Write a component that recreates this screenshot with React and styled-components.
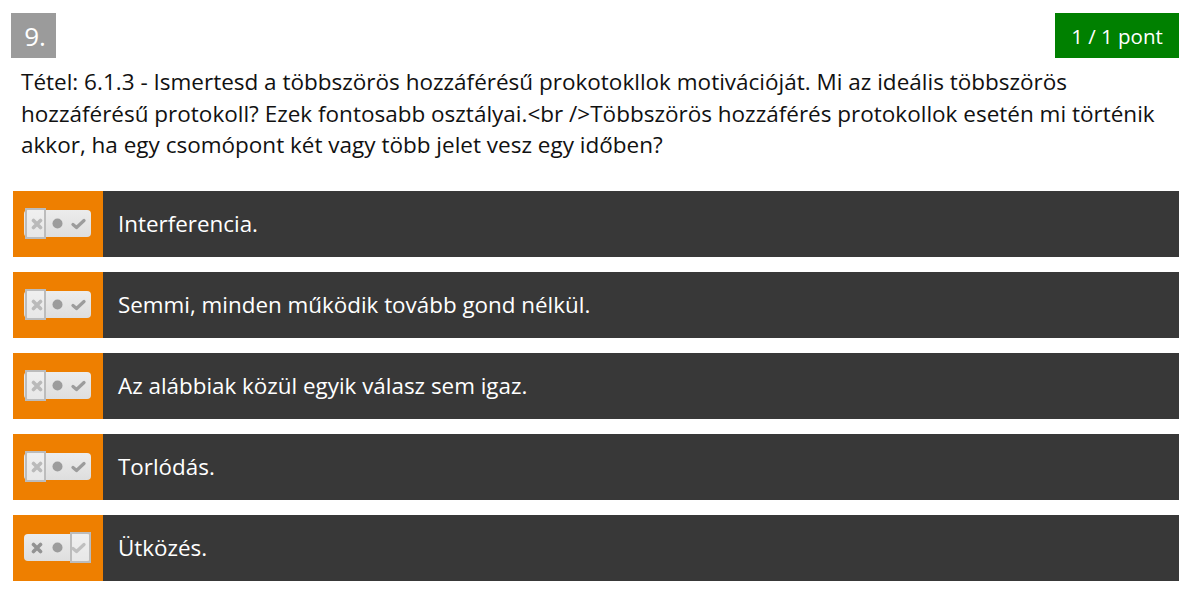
import React from "react";
import styled, { createGlobalStyle } from "styled-components";

const GlobalStyle = createGlobalStyle`
  html, body {
    margin: 0;
    padding: 0;
    background: #fff;
  }
  body {
    font-family: "Open Sans", "Noto Sans", sans-serif;
  }
`;

const Page = styled.div`
  padding: 13px 8px 0 11px;
`;

const Header = styled.div`
  display: flex;
  justify-content: space-between;
  align-items: flex-start;
`;

const Number = styled.div`
  width: 45px;
  height: 45px;
  background-color: #9b9b9b;
  color: #fff;
  font-size: 26px;
  display: flex;
  align-items: center;
  justify-content: center;
  padding-left: 3px;
  box-sizing: border-box;
`;

const Points = styled.div`
  height: 45px;
  width: 124px;
  background-color: #008000;
  color: #fff;
  font-size: 20.5px;
  display: flex;
  align-items: center;
  justify-content: center;
`;

const Question = styled.p`
  margin: 8px 0 0 10px;
  font-size: 22.5px;
  line-height: 31.5px;
  color: #111;
  white-space: nowrap;
`;

const Answers = styled.div`
  margin: 30px 0 0 2px;
  display: flex;
  flex-flow: column nowrap;
  gap: 15px;
`;

const Row = styled.div`
  height: 66px;
  display: flex;
  background-color: #383838;
`;

const Side = styled.div`
  width: 90px;
  flex-shrink: 0;
  background-color: #ee7f00;
  display: flex;
  align-items: center;
  padding-left: 11px;
  box-sizing: border-box;
`;

const Toggle = styled.div`
  position: relative;
  width: 67px;
  height: 27px;
  border-radius: 4px;
  background: linear-gradient(#ececec, #dedede);
  display: flex;
  align-items: center;
  padding: 0 2px;
  box-sizing: border-box;
`;

const Seg = styled.div`
  flex: 1;
  height: 100%;
  display: flex;
  align-items: center;
  justify-content: center;
  filter: blur(0.4px);
`;

const Selected = styled.div`
  position: absolute;
  top: -2px;
  bottom: -2px;
  width: 21px;
  ${(p) => (p.pos === "right" ? "right: 0;" : "left: 1px;")}
  border: 2px solid #bcbcbc;
  background: rgba(245, 245, 245, 0.4);
  box-sizing: border-box;
`;

const Label = styled.div`
  flex: 1;
  display: flex;
  align-items: center;
  padding-left: 15px;
  color: #fff;
  font-size: 22.4px;
`;

const Cross = () => (
  <svg width="12" height="12" viewBox="0 0 12 12">
    <path d="M2.5 2.5 L9.5 9.5 M9.5 2.5 L2.5 9.5" stroke="#939393" strokeWidth="3.6" strokeLinecap="round" />
  </svg>
);

const Dot = () => (
  <svg width="11" height="11" viewBox="0 0 11 11">
    <circle cx="5.5" cy="5.5" r="5" fill="#9c9c9c" />
  </svg>
);

const Check = () => (
  <svg width="15" height="12" viewBox="0 0 15 12">
    <path d="M2 6.5 L5.5 9.5 L13 2.5" fill="none" stroke="#9c9c9c" strokeWidth="3.2" strokeLinecap="round" strokeLinejoin="round" />
  </svg>
);

const Switch = ({ pos }) => (
  <Toggle>
    <Seg><Cross /></Seg>
    <Seg><Dot /></Seg>
    <Seg><Check /></Seg>
    <Selected pos={pos} />
  </Toggle>
);

const answers = [
  { text: "Interferencia.", pos: "left" },
  { text: "Semmi, minden működik tovább gond nélkül.", pos: "left" },
  { text: "Az alábbiak közül egyik válasz sem igaz.", pos: "left" },
  { text: "Torlódás.", pos: "left" },
  { text: "Ütközés.", pos: "right" },
];

export default function App() {
  return (
    <Page>
      <GlobalStyle />
      <Header>
        <Number>9.</Number>
        <Points>1 / 1 pont</Points>
      </Header>
      <Question>
        Tétel: 6.1.3 - Ismertesd a többszörös hozzáférésű prokotokllok motivációját. Mi az ideális többszörös
        <br />
        hozzáférésű protokoll? Ezek fontosabb osztályai.&lt;br /&gt;Többszörös hozzáférés protokollok esetén mi történik
        <br />
        akkor, ha egy csomópont két vagy több jelet vesz egy időben?
      </Question>
      <Answers>
        {answers.map((a) => (
          <Row key={a.text}>
            <Side>
              <Switch pos={a.pos} />
            </Side>
            <Label>{a.text}</Label>
          </Row>
        ))}
      </Answers>
    </Page>
  );
}
